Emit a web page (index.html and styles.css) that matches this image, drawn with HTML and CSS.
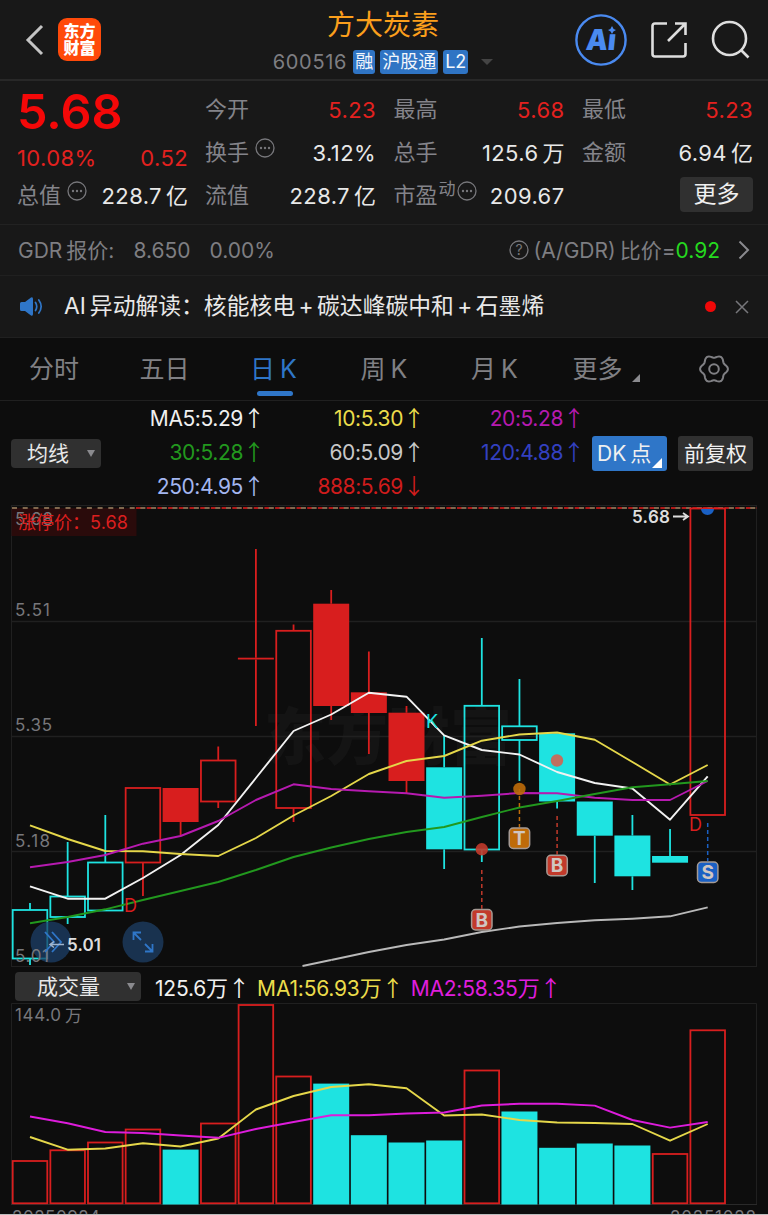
FILE: index.html
```html
<!DOCTYPE html>
<html lang="zh-CN">
<head>
  <meta charset="UTF-8" />
  <meta name="viewport" content="width=device-width, initial-scale=1" />
  <title>方大炭素 600516</title>
  <link rel="stylesheet" href="styles.css">
</head>
<body>
  <header class="header">
    <div class="header-left">
      <svg class="back" width="20" height="34" viewBox="0 0 20 34"><path d="M17 3 L3 17 L17 31" /></svg>
      <div class="logo"><span>东方</span><span>财富</span></div>
    </div>
    <div class="header-title">
      <h1>方大炭素</h1>
      <div class="code-row">
        <span class="code">600516</span>
        <span class="badge">融</span>
        <span class="badge">沪股通</span>
        <span class="badge">L2</span>
        <span class="caret"></span>
      </div>
    </div>
    <div class="header-right">
      <svg width="52" height="52" viewBox="0 0 52 52">
        <circle cx="26" cy="26" r="24.6" fill="none" stroke="#4a8af0" stroke-width="2.4" />
        <text class="ai-text" x="14" y="36.5" textLength="30" lengthAdjust="spacingAndGlyphs" transform="skewX(-6)">Aı</text>
        <path d="M37 12 Q37.8 15.2 41 16 Q37.8 16.8 37 20 Q36.2 16.8 33 16 Q36.2 15.2 37 12Z" fill="#4a8af0" />
      </svg>
      <svg class="line-icon" width="40" height="40" viewBox="0 0 40 40">
        <path d="M18 3.500H6 Q3.500 3.500 3.500 6 V34 Q3.500 36.500 6 36.500 H34 Q36.500 36.500 36.500 34 V23 M19 21 L36 4 M26 3.500 H36.500 V15" />
      </svg>
      <svg class="line-icon" width="40" height="40" viewBox="0 0 40 40">
        <circle cx="18.500" cy="18.500" r="16.500" /><path d="M30 30 L37.500 37.500" />
      </svg>
    </div>
  </header>

  <section class="quote">
    <div class="quote-main">
      <div class="price">5.68</div>
      <div class="change"><span>10.08%</span><span>0.52</span></div>
      <div class="cell"><span class="label">总值</span><svg class="dots"><use href="#dots" /></svg><b>228.7<i>亿</i></b></div>
    </div>
    <div class="quote-grid">
      <div class="cell"><span class="label">今开</span><b class="up">5.23</b></div>
      <div class="cell"><span class="label">最高</span><b class="up">5.68</b></div>
      <div class="cell"><span class="label">最低</span><b class="up">5.23</b></div>
      <div class="cell"><span class="label">换手</span><svg class="dots"><use href="#dots" /></svg><b>3.12%</b></div>
      <div class="cell"><span class="label">总手</span><b>125.6<i>万</i></b></div>
      <div class="cell"><span class="label">金额</span><b>6.94<i>亿</i></b></div>
      <div class="cell"><span class="label">流值</span><b>228.7<i>亿</i></b></div>
      <div class="cell"><span class="label">市盈</span><sup>动</sup><svg class="dots tight"><use href="#dots" /></svg><b>209.67</b></div>
      <div class="cell"><button class="more">更多</button></div>
    </div>
  </section>

  <section class="gdr">
    <span class="gdr-name">GDR<i>报价:</i></span>
    <span class="gdr-price">8.650</span>
    <span>0.00%</span>
    <div class="gdr-right">
      <svg width="20" height="20" viewBox="0 0 20 20"><circle cx="10" cy="10" r="9" fill="none" stroke="#77777b" stroke-width="1.300" /><text class="q-mark" x="10" y="15" text-anchor="middle">?</text></svg>
      <span class="ratio">(A/GDR)<i>比价=</i></span><span class="ratio-value">0.92</span>
      <svg class="arrow" width="12" height="20" viewBox="0 0 12 20"><path d="M1.500 1.500 L10 10 L1.500 18.500" /></svg>
    </div>
  </section>

  <section class="news">
    <svg width="24" height="22" viewBox="0 0 24 22">
      <path d="M1 7.500 Q1 6 2.500 6 H6 L12 1.500 Q14 0.500 14 3 V18 Q14 20.500 12 19.500 L6 15 H2.500 Q1 15 1 13.500Z" fill="#2f76c8" />
      <path d="M16.500 6.500 Q19 10.500 16.500 14.500 M19.800 4 Q24.500 10.500 19.800 17" fill="none" stroke="#2f76c8" stroke-width="1.700" stroke-linecap="round" />
    </svg>
    <p>AI<i>异动解读：</i><i>核能核电</i><em>+</em><i>碳达峰碳中和</i><em>+</em><i>石墨烯</i></p>
    <span class="red-dot"></span>
    <svg class="close" width="14" height="14" viewBox="0 0 14 14"><path d="M1 1 L13 13 M13 1 L1 13" /></svg>
  </section>

  <nav class="tabs">
    <a>分时</a>
    <a>五日</a>
    <a class="active">日<u>K</u></a>
    <a>周<u>K</u></a>
    <a>月<u>K</u></a>
    <a class="tab-more">更多<span class="corner"></span></a>
    <svg width="32" height="30" viewBox="-16 -15 32 30">
      <path id="gear" />
      <circle r="4.800" />
    </svg>
  </nav>

  <section class="ma">
    <div class="select">均线<span class="caret"></span></div>
    <div class="ma-grid">
      <span class="c-white">MA5:5.29<i>↑</i></span>
      <span class="c-yellow">10:5.30<i>↑</i></span>
      <span class="c-purple">20:5.28<i>↑</i></span>
      <span class="c-green">30:5.28<i>↑</i></span>
      <span class="c-gray">60:5.09<i>↑</i></span>
      <span class="c-blue">120:4.88<i>↑</i></span>
      <span class="c-light">250:4.95<i>↑</i></span>
      <span class="c-red">888:5.69<i>↓</i></span>
    </div>
    <button class="dk">DK<i>点</i><span class="corner"></span></button>
    <button class="adjust">前复权</button>
  </section>

  <svg class="chart" id="kline" width="768" height="462" viewBox="0 505 768 462"></svg>

  <section class="vol-head">
    <div class="select wide">成交量<span class="caret"></span></div>
    <span class="c-white">125.6<i>万↑</i></span>
    <span class="c-yellow">MA1:56.93<i>万↑</i></span>
    <span class="c-magenta">MA2:58.35<i>万↑</i></span>
  </section>

  <svg class="chart" id="volume" width="768" height="211" viewBox="0 1003 768 211"></svg>

  <svg class="defs">
    <symbol id="dots" viewBox="0 0 20 20">
      <circle cx="10" cy="10" r="9" fill="none" stroke="#77777b" stroke-width="1.300" />
      <circle cx="6" cy="10" r="1.200" fill="#77777b" /><circle cx="10" cy="10" r="1.200" fill="#77777b" /><circle cx="14" cy="10" r="1.200" fill="#77777b" />
    </symbol>
  </svg>

  <script>
    const RED = '#d81e1e';
    const CYAN = '#1ee3e1';
    const step = 37.65;
    const cx = i => 30 + i * step;

    // [color, filled, top, bottom, high, low]
    const candles = [
      [CYAN, 0, 910, 958.5, 903, 965],
      [CYAN, 0, 896.5, 917, 842, 924],
      [CYAN, 0, 862.5, 910.5, 815, 910.5],
      [RED, 0, 788, 862.5, 788, 896],
      [RED, 1, 788, 822, 788, 835.5],
      [RED, 0, 760.5, 801.5, 746.5, 808],
      [RED, 1, 657.7, 659.5, 549, 726],
      [RED, 0, 630.8, 808, 624.5, 822],
      [RED, 1, 603.7, 706, 590, 720],
      [RED, 1, 692.3, 713, 651.5, 754],
      [RED, 1, 712.7, 781, 706, 794],
      [CYAN, 1, 767.3, 849.3, 735, 869],
      [CYAN, 0, 705.8, 849.5, 638, 862],
      [CYAN, 0, 726.3, 740, 679, 781],
      [CYAN, 1, 733.3, 801.5, 733.3, 808.5],
      [CYAN, 1, 801.5, 835.7, 801.5, 883],
      [CYAN, 1, 835.5, 876.3, 815, 890],
      [CYAN, 1, 856, 862.7, 829, 862.7],
      [RED, 0, 508.5, 815, 508.5, 815]
    ];

    // [color, filled, top]
    const volumes = [
      [RED, 0, 1161], [RED, 0, 1150.3], [RED, 0, 1142.5], [RED, 0, 1129.5], [CYAN, 1, 1149.6],
      [RED, 0, 1123.5], [RED, 0, 1005], [RED, 0, 1076.5], [CYAN, 1, 1083.6], [CYAN, 1, 1135.2],
      [CYAN, 1, 1142.5], [CYAN, 1, 1140.5], [RED, 0, 1070.5], [CYAN, 1, 1111.5], [CYAN, 1, 1147.8],
      [CYAN, 1, 1143.5], [CYAN, 1, 1145.5], [RED, 0, 1154], [RED, 0, 1030.3]
    ];

    const lines = {
      '#b9b9b9': [null, null, null, null, null, null, null, null, 960, 952, 945, 939.5, 932, 926.5, 923, 920.3, 918.7, 916.3, 907.3],
      '#f2f2f2': [886.3, 898.7, 898.7, 878, 855, 825, 778, 731, 714.5, 692.7, 696.7, 735.3, 750, 754.5, 772, 783, 788.5, 819.7, 776.3],
      '#e5d74a': [825.3, 839, 851, 851.3, 854, 856, 838, 815.5, 796, 774, 761, 756, 740.7, 734.5, 732.5, 739.7, 762, 784.5, 765],
      '#b61ab0': [867.2, 862, 855, 843.7, 836, 821, 800, 784.3, 789, 791.3, 793.3, 797.8, 795.7, 793, 793.3, 797.8, 800, 800, 781],
      '#22981e': [923.3, 917, 909.3, 900, 891, 882, 870, 857, 847.5, 839, 832, 827, 817, 807.5, 801, 794, 787.3, 784.3, 781]
    };
    const volLines = {
      '#e5d74a': [1137, 1149.7, 1148.5, 1143.3, 1146.5, 1138.5, 1109.5, 1096, 1087, 1084.3, 1088.3, 1115.5, 1114.5, 1120, 1122.5, 1123, 1124, 1140.7, 1124],
      '#dd1cdb': [1116.5, 1123.3, 1132, 1133, 1135.5, 1137.8, 1129, 1122, 1115.3, 1115.2, 1113.5, 1112.5, 1105.5, 1103.8, 1103.8, 1105.6, 1120, 1127.6, 1122]
    };

    function body(i, color, filled, top, bottom) {
      return filled
        ? `<rect x="${cx(i) - 18}" y="${top}" width="36" height="${bottom - top}" fill="${color}" />`
        : `<rect x="${cx(i) - 17.3}" y="${top}" width="34.600" height="${bottom - top}" fill="none" stroke="${color}" stroke-width="1.800" />`;
    }

    function wick(i, color, y1, y2) {
      return y2 > y1 ? `<path d="M${cx(i)} ${y1}V${y2}" stroke="${color}" stroke-width="1.800" />` : '';
    }

    function polyline(color, values) {
      const pts = values.map((y, i) => y === null ? '' : `${cx(i)},${y}`).join(' ');
      return `<polyline points="${pts}" fill="none" stroke="${color}" stroke-width="1.900" stroke-linejoin="round" />`;
    }

    // trade marks: letter, color, candle index, dot y, line start, badge center
    function mark(letter, color, i, dot, from, y) {
      const x = cx(i);
      return (dot ? `<circle cx="${x}" cy="${dot}" r="6.200" fill="${color}" opacity="0.9" />` : '') +
        `<path d="M${x} ${from}V${y - 11}" stroke="${color}" stroke-width="1.500" stroke-dasharray="4 3" />
        <rect x="${x - 10.2}" y="${y - 10.2}" width="20.400" height="20.400" rx="4" fill="${color}" stroke="#a59a94" stroke-width="1.500" />
        <text class="mark" x="${x}" y="${y + 6.9}" text-anchor="middle">${letter}</text>`;
    }

    const grid = [621.5, 736.5, 851.5].map(y => `<path d="M11 ${y}H757" stroke="#202020" stroke-width="1.500" />`).join('');

    document.getElementById('kline').innerHTML = `
      <text class="watermark" x="264" y="760">东方财富</text>
      ${grid}
      <rect x="11.500" y="505.500" width="745" height="461" fill="none" stroke="#202020" />
      <rect x="11.500" y="508" width="125" height="28" fill="#2a0b0b" />
      <text class="axis" x="15" y="525" textLength="38">5.68</text>
      <text class="axis" x="15" y="616" textLength="35">5.51</text>
      <text class="axis" x="15" y="731" textLength="37">5.35</text>
      <text class="axis" x="15" y="846.500" textLength="35">5.18</text>
      <text class="limit" x="18" y="529">涨停价：</text>
      <text class="limit" x="90" y="528.500" textLength="38">5.68</text>
      <path d="M136 508H757" stroke="#b01818" stroke-width="1.800" stroke-dasharray="9 1.700" />
      <path d="M12 508H757" stroke="#80684e" stroke-width="1.800" stroke-dasharray="5 5.700" />
      ${candles.map((c, i) => body(i, c[0], c[1], c[2], c[3]) + wick(i, c[0], c[4], c[2]) + wick(i, c[0], c[3], c[5])).join('')}
      ${Object.entries(lines).map(([color, v]) => polyline(color, v)).join('')}
      <path d="M302.500 966L331 960" stroke="#b9b9b9" stroke-width="1.800" />
      <path d="M701 509a6.500 6 0 0 0 13 0z" fill="#1a60c4" />
      <text class="letter" x="124" y="912" fill="${RED}">D</text>
      <text class="letter" x="689" y="830.500" fill="${RED}">D</text>
      <text class="letter" x="426" y="728" fill="${CYAN}">K</text>
      <text class="price-tag" x="632" y="523" textLength="38">5.68</text>
      <path d="M673 516.500H687M683 513L688 516.500L683 520" fill="none" stroke="#ddd" stroke-width="1.800" />
      ${mark('B', '#c23a2b', 12, 849.3, 870, 919.7)}
      ${mark('T', '#bf6b09', 13, 789, 789, 838.3)}
      ${mark('B', '#c23a2b', 14, 0, 816, 865.5)}
      <circle cx="557" cy="760.500" r="6.200" fill="#c0705f" />
      ${mark('S', '#1a60c4', 18, 0, 823, 872.3)}
      <circle cx="51" cy="942" r="20.500" fill="#1c3f68" opacity="0.75" />
      <text class="axis" x="15" y="962" textLength="34">5.01</text>
      <path d="M45 932L54 942L45 952M52 932L61 942L52 952" fill="none" stroke="#2f76c8" stroke-width="1.800" />
      <path d="M50 944.500H64M54 941.500L50 944.500L54 947.500" fill="none" stroke="#9fb4cc" stroke-width="1.500" />
      <text class="price-tag" x="67" y="951" textLength="34">5.01</text>
      <circle cx="143" cy="942" r="20.500" fill="#19324f" />
      <path d="M141 940L134 933M133.500 940V932.500H141M145 944L152 951M145 951.500H152.500V944" fill="none" stroke="#2f76c8" stroke-width="1.800" />`;

    document.getElementById('volume').innerHTML = `
      <path d="M11.500 1204V1003.500H756.500V1204" fill="none" stroke="#202020" />
      <path d="M11 1204.500H757" stroke="#2a2a2a" />
      <text class="axis" x="15" y="1021" textLength="46">144.0</text>
      <text class="axis" x="65" y="1021.500">万</text>
      ${volumes.map((v, i) => body(i, v[0], v[1], v[2], v[1] ? 1204.5 : 1203.3)).join('')}
      ${Object.entries(volLines).map(([color, v]) => polyline(color, v)).join('')}
      <text class="axis" x="12" y="1222.500" textLength="88">20250924</text>
      <text class="axis" x="670" y="1222.500" textLength="86">20251028</text>`;

    // six-lobed settings outline
    let d = '';
    for (let a = 0; a <= 360; a += 4) {
      const r = 12.6 + 1.3 * Math.cos(6 * a * Math.PI / 180);
      d += `${a ? 'L' : 'M'}${(r * Math.cos(a * Math.PI / 180)).toFixed(2)} ${(r * Math.sin(a * Math.PI / 180)).toFixed(2)}`;
    }
    document.getElementById('gear').setAttribute('d', d + 'Z');
  </script>
</body>
</html>
```
FILE: styles.css
```css
* {
  box-sizing: border-box;
}

body {
  margin: 0;
  width: 768px;
  height: 1215px;
  overflow: hidden;
  background: #0d0d0d;
  color: #e8e8e8;
  font-family: Inter, "Noto Sans CJK SC", sans-serif;
  font-size: 22px;
  line-height: 1;
  border-bottom: 1px solid #bdbdbd;
  white-space: nowrap;
}

i, em, u, b {
  font-style: normal;
  font-weight: 400;
  text-decoration: none;
}

button {
  border: none;
  padding: 0;
  font: inherit;
  color: #f0f0f0;
}

.defs {
  display: none;
}

.header {
  display: grid;
  grid-template-columns: 1fr 240px 1fr;
  height: 81px;
  background: #181818;
  border-bottom: 2px solid #282828;
}

.header-left {
  display: flex;
  align-items: center;
  padding-left: 25px;
  gap: 13px;
}

.back path {
  fill: none;
  stroke: #c4c4c4;
  stroke-width: 3;
}

.logo {
  display: flex;
  flex-direction: column;
  justify-content: center;
  align-items: center;
  gap: 1px;
  width: 43px;
  height: 43px;
  border-radius: 9px;
  background: #ff4a0a;
  color: #fff;
  font-size: 16px;
  font-weight: 900;
}

.header-title {
  display: flex;
  flex-direction: column;
  align-items: center;
  padding-right: 2px;
}

h1 {
  margin: 11px 0 0;
  color: #fb9f1c;
  font-size: 28px;
  font-weight: 400;
  line-height: 28px;
}

.code-row {
  display: flex;
  align-items: center;
  gap: 5px;
  margin-top: 11px;
}

.code {
  color: #7e7e82;
  margin-right: 1px;
  font-size: 20px;
  letter-spacing: 0.7px;
}

.badge {
  height: 24px;
  padding: 0 2px;
  border-radius: 3px;
  background: #2f74c4;
  color: #f2f6fb;
  font-size: 18px;
  line-height: 24px;
}

.caret {
  border: 6px solid transparent;
  border-top: 6px solid #444;
  border-bottom: 0;
}

.code-row .caret {
  margin-left: 8px;
}

.header-right {
  display: flex;
  align-items: center;
  justify-content: flex-end;
  gap: 22px;
  padding-right: 17px;
}

.ai-text {
  fill: #4a8af0;
  font-size: 29px;
  font-weight: 900;
}

.line-icon {
  fill: none;
  stroke: #dedede;
  stroke-width: 2.6;
}

.quote {
  display: flex;
  gap: 17px;
  height: 144px;
  padding: 7px 15px 0 17px;
  background: #181818;
  border-bottom: 1px solid #222;
}

.quote-main {
  width: 171px;
}

.price {
  height: 48px;
  color: #f40808;
  font-size: 48.5px;
  font-weight: 600;
  line-height: 48px;
}

.change {
  display: flex;
  justify-content: space-between;
  height: 38px;
  line-height: 45px;
  color: #e3211f;
  font-size: 22px;
  letter-spacing: 0.4px;
}

.quote-grid {
  display: grid;
  flex: 1;
  grid-template-columns: repeat(3, 171px);
  grid-auto-rows: 43px;
  column-gap: 17.500px;
}

.cell {
  display: flex;
  align-items: center;
  height: 43px;
}

.cell b {
  margin-left: auto;
  font-size: 22px;
  letter-spacing: 0.4px;
}

.cell i {
  margin-left: 4px;
  font-size: 22px;
  letter-spacing: 0;
}

.cell .up {
  color: #e3211f;
}

.label {
  padding-bottom: 2px;
  color: #84848a;
}

.dots {
  width: 20px;
  height: 20px;
  margin: -9px 0 0 6px;
}

.dots.tight {
  margin-left: 1px;
}

sup {
  margin: -12px 0 0 1px;
  color: #84848a;
  font-size: 17px;
  line-height: 17px;
}

.more {
  width: 73px;
  height: 35px;
  margin: -3px 0 0 auto;
  border-radius: 4px;
  background: #303030;
  font-size: 23px;
}

.gdr {
  display: flex;
  align-items: center;
  height: 51px;
  padding: 0 18px;
  background: #181818;
  border-bottom: 1px solid #202020;
  color: #7e7e82;
  font-size: 21px;
}

.gdr i {
  margin-left: 4px;
  font-size: 21px;
}

.gdr-price {
  margin: 0 19px 0 19px;
}

.gdr-right {
  display: flex;
  align-items: center;
  margin-left: auto;
}

.q-mark {
  fill: #77777b;
  font-size: 14px;
}

.ratio {
  margin-left: 5px;
}

.ratio-value {
  color: #25d81f;
}

.arrow {
  margin-left: 18px;
  fill: none;
  stroke: #8a8a8e;
  stroke-width: 2;
}

.news {
  display: flex;
  align-items: center;
  height: 62px;
  padding: 0 19px;
  background: #181818;
  border-bottom: 1px solid #202020;
}

.news p {
  flex: 1;
  margin: 0 0 0 21px;
  font-size: 22.800px;
}

.news i:first-child {
  margin-left: 4px;
}

.news em {
  display: inline-block;
  width: 22px;
  text-align: center;
}

.red-dot {
  width: 11px;
  height: 11px;
  border-radius: 50%;
  background: #f00808;
}

.close {
  margin-left: 19px;
  stroke: #77777b;
  stroke-width: 1.500;
}

.tabs {
  display: flex;
  align-items: center;
  height: 63px;
  padding-left: 29px;
  border-bottom: 1px solid #202020;
  color: #808084;
  font-size: 25px;
}

.tabs a {
  position: relative;
  width: 110.500px;
}

.tabs u {
  margin-left: 5px;
}

.tabs .active {
  color: #2f76c8;
}

.active::after {
  content: "";
  position: absolute;
  left: 7px;
  bottom: -14px;
  width: 36px;
  height: 5px;
  border-radius: 3px;
  background: #2f76c8;
}

.corner {
  display: inline-block;
  border-left: 8px solid transparent;
  border-bottom: 8px solid #8a8a8e;
}

.tabs .tab-more {
  width: 125px;
  margin-left: -9px;
}

.tab-more .corner {
  margin-left: 9px;
  vertical-align: -4px;
}

.tabs svg {
  fill: none;
  stroke: #808084;
  stroke-width: 2;
}

.ma {
  display: flex;
  align-items: center;
  height: 104px;
  padding-left: 11px;
}

.select {
  display: flex;
  align-items: center;
  justify-content: space-between;
  width: 90px;
  height: 29px;
  padding: 0 6px 0 16px;
  border-radius: 4px;
  background: #303030;
  font-size: 21px;
}

.select .caret {
  border-width: 6px 4px 0;
  border-top: 7px solid #8a8a8e;
}

.ma-grid {
  display: grid;
  grid-template-columns: repeat(3, 160px);
  grid-auto-rows: 34px;
  width: 480px;
  margin-left: 4px;
  text-align: right;
  font-size: 21px;
  letter-spacing: -0.4px;
  line-height: 34px;
}

.ma-grid i, .vol-head i {
  font-family: "Noto Sans CJK SC", sans-serif;
  font-size: 22px;
  line-height: 1;
  letter-spacing: 0;
}

.dk, .adjust {
  height: 35px;
  border-radius: 3px;
  background: #303030;
  font-size: 21px;
}

.dk {
  position: relative;
  width: 75px;
  margin-left: 7px;
  padding-left: 5px;
  background: #2f76c8;
  text-align: left;
}

.dk i {
  margin-left: 4px;
}

.dk .corner {
  position: absolute;
  right: 5px;
  bottom: 3px;
  border-left-width: 10px;
  border-bottom: 10px solid #fff;
}

.adjust {
  width: 75px;
  margin-left: 11px;
}

.c-white { color: #f0f0f0; }
.c-yellow { color: #ebdc4b; }
.c-purple { color: #b61ab0; }
.c-green { color: #22981e; }
.c-gray { color: #c8c8c8; }
.c-blue { color: #3340c0; }
.c-light { color: #a3b6f0; }
.c-red { color: #cf1c1c; }
.c-magenta { color: #e01ede; }

.chart {
  display: block;
}

.vol-head {
  display: flex;
  align-items: center;
  height: 36px;
  padding: 3px 0 0 15px;
  font-size: 21px;
  letter-spacing: -0.2px;
}

.vol-head > span {
  margin-left: 7px;
}

.select.wide {
  width: 126px;
  padding-left: 22px;
  margin-right: 7px;
  letter-spacing: 0;
}

.chart text {
  font-family: Inter, "Noto Sans CJK SC", sans-serif;
}

.axis {
  fill: #77777b;
  font-size: 17px;
}

.limit {
  fill: #dc1f1f;
  font-size: 18px;
}

.letter {
  font-size: 18px;
}

.price-tag {
  fill: #dedede;
  font-size: 17px;
  font-weight: 600;
}

.mark {
  fill: #d0c6c2;
  font-size: 19px;
  font-weight: 700;
}

.watermark {
  fill: #141414;
  font-size: 62px;
  font-weight: 900;
}
```
